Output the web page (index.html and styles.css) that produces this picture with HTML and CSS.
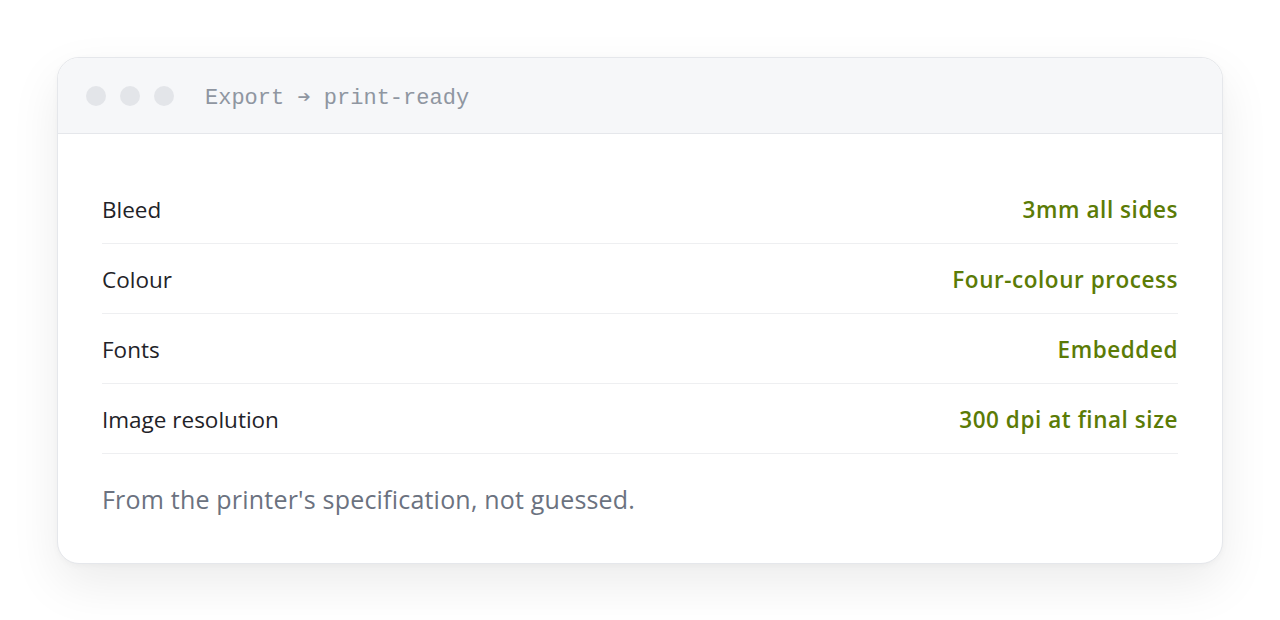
FILE: index.html
```html
<!DOCTYPE html>
<html>
<head>
  <meta charset="UTF-8">
  <title>Export print-ready</title>
  <link rel="stylesheet" href="styles.css">
</head>
<body>
  <div class="window">
    <div class="titlebar">
      <span class="dot"></span>
      <span class="dot"></span>
      <span class="dot"></span>
      <span class="title">Export ➔ print-ready</span>
    </div>

    <div class="content">
      <div class="row">
        <span class="label">Bleed</span>
        <span class="value">3mm all sides</span>
      </div>
      <div class="row">
        <span class="label">Colour</span>
        <span class="value">Four-colour process</span>
      </div>
      <div class="row">
        <span class="label">Fonts</span>
        <span class="value">Embedded</span>
      </div>
      <div class="row">
        <span class="label">Image resolution</span>
        <span class="value">300 dpi at final size</span>
      </div>

      <p class="note">From the printer's specification, not guessed.</p>
    </div>
  </div>
</body>
</html>
```

FILE: styles.css
```css
body {
  margin: 0;
  padding: 57px;
  background: #ffffff;
  font-family: "Open Sans", "Noto Sans", Arial, sans-serif;
}

.window {
  background: white;
  border: 1px solid #e5e7eb;
  border-radius: 22px;
  overflow: hidden;
  box-shadow: 0 20px 50px rgba(0,0,0,0.08), 0 2px 6px rgba(0,0,0,0.03);
}

.titlebar {
  display: flex;
  align-items: center;
  height: 75px;
  padding: 0 28px;
  background: #f6f7f9;
  border-bottom: 1px solid #e5e7eb;
}

.dot {
  width: 20px;
  height: 20px;
  border-radius: 50%;
  background: #e3e5e9;
  margin-right: 14px;
}

.title {
  margin-left: 17px;
  padding-top: 4px;
  font-family: "Liberation Mono", "DejaVu Sans Mono", monospace;
  font-size: 22px;
  color: #8f96a1;
}

.content {
  padding: 40px 44px 47px;
}

.row {
  display: flex;
  justify-content: space-between;
  align-items: center;
  height: 67px;
  padding-top: 2px;
  border-bottom: 1px solid #eeeff1;
  font-size: 22.5px;
}

.label {
  color: #1f2328;
}

.value {
  color: #5b7b06;
  font-weight: 600;
  letter-spacing: 0.55px;
}

.note {
  margin: 28px 0 0;
  font-size: 25px;
  letter-spacing: 0.2px;
  color: #6b7280;
}
```
